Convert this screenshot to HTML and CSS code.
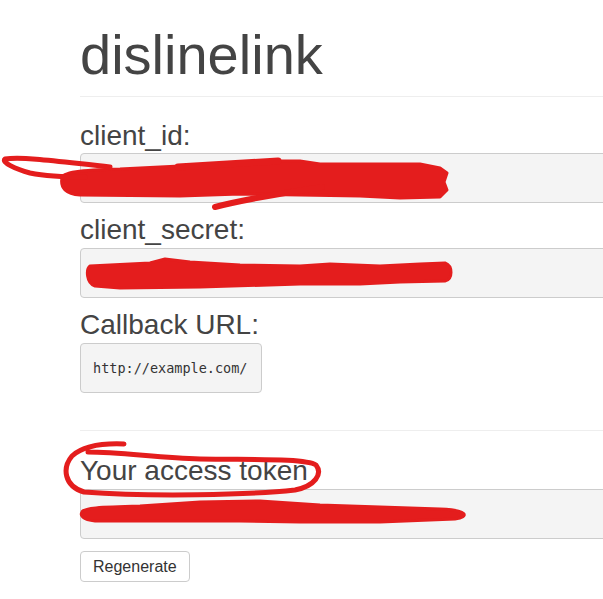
FILE: index.html
```html
<!DOCTYPE html>
<html lang="en">
<head>
    <meta charset="UTF-8">
    <title>dislinelink</title>
    <link rel="stylesheet" href="styles.css">
</head>
<body>
    <div class="container">
        <h1>dislinelink</h1>
        <hr>

        <div class="field">
            <label>client_id:</label>
            <div class="input-box"></div>
        </div>

        <div class="field">
            <label>client_secret:</label>
            <div class="input-box"></div>
        </div>

        <div class="field">
            <label>Callback URL:</label>
            <div class="input-box callback"><code>http://example.com/</code></div>
        </div>

        <hr class="divider">

        <div class="field">
            <label>Your access token</label>
            <div class="input-box"></div>
        </div>
        <button class="button">Regenerate</button>
    </div>

    <!-- red marker scribbles drawn over the screenshot -->
    <svg class="marks" width="603" height="599" viewBox="0 0 603 599">
        <g fill="#e41d1d" stroke="#e41d1d" stroke-width="3" stroke-linejoin="round">
            <path d="M62 178 C 62 172, 80 170, 120 169 L 180 166 L 260 161 L 300 161 L 320 164 L 420 164 L 440 168 L 447 173 L 444 182 L 447 190 L 440 197 L 400 198 L 360 196 L 300 195 L 240 194 L 180 196 L 80 195 C 66 194, 60 188, 62 178 Z"/>
            <path d="M90 266 L 150 263 L 165 259 L 190 262 L 240 265 L 300 266 L 330 264 L 380 266 L 420 264 L 445 263 C 453 266, 453 279, 445 281 L 400 282 L 360 284 L 300 284 L 200 287 L 120 288 L 95 286 C 86 283, 86 269, 90 266 Z"/>
            <path d="M82 512 C 82 508, 100 507, 140 506 L 200 502 L 260 501 L 320 505 L 380 507 L 440 509 C 468 510, 470 517, 455 519 L 380 522 L 300 522 L 240 521 L 150 521 L 95 521 C 82 520, 80 515, 82 512 Z"/>
        </g>
        <g fill="none" stroke="#e41d1d" stroke-linecap="round" stroke-linejoin="round">
            <path stroke-width="5" d="M110 167 C 70 163, 25 156, 5 159 C 1 162, 15 169, 30 173 C 45 176, 60 177, 85 177"/>
            <path stroke-width="7" d="M178 167 L 278 161"/>
            <path stroke-width="6" d="M215 207 C 250 198, 290 192, 322 187"/>
            <path stroke-width="5" d="M124 444 C 100 443, 82 447, 72 456 C 62 468, 64 486, 84 492 C 150 497, 250 495, 295 490 C 315 486, 323 474, 316 465 C 305 458, 250 460, 200 459 C 160 458, 120 452, 88 452"/>
        </g>
    </svg>
</body>
</html>
```

FILE: styles.css
```css
html, body {
    margin: 0;
    padding: 0;
    overflow: hidden;
    background-color: white;
}
body {
    font-family: 'Liberation Sans', Arial, sans-serif;
    color: #444;
    position: relative;
}
.container {
    width: 560px;
    padding-left: 80px;
    padding-top: 24px;
}
h1 {
    font-size: 56px;
    font-weight: normal;
    line-height: 1.1;
    margin: 0;
}
hr {
    border: none;
    border-top: 1px solid #eee;
    margin: 10px 0 24px;
}
.divider {
    margin: 37px 0 25px;
}
.field {
    margin-bottom: 12px;
}
label {
    display: block;
    font-size: 28px;
    line-height: 1.1;
    margin-bottom: 2px;
}
.input-box {
    box-sizing: border-box;
    height: 50px;
    background-color: #f4f4f4;
    border: 1px solid #ccc;
    border-radius: 4px;
}
.callback {
    width: 182px;
    display: flex;
    align-items: center;
    padding-left: 12px;
}
.callback code {
    font-family: 'DejaVu Sans Mono', 'Liberation Mono', monospace;
    font-size: 13.5px;
    color: #333;
}
.button {
    font-family: 'Liberation Sans', Arial, sans-serif;
    font-size: 16px;
    line-height: 17px;
    color: #333;
    background-color: white;
    border: 1px solid #ccc;
    border-radius: 4px;
    padding: 6px 12px;
}
.marks {
    position: absolute;
    top: 0;
    left: 0;
    pointer-events: none;
}
```
